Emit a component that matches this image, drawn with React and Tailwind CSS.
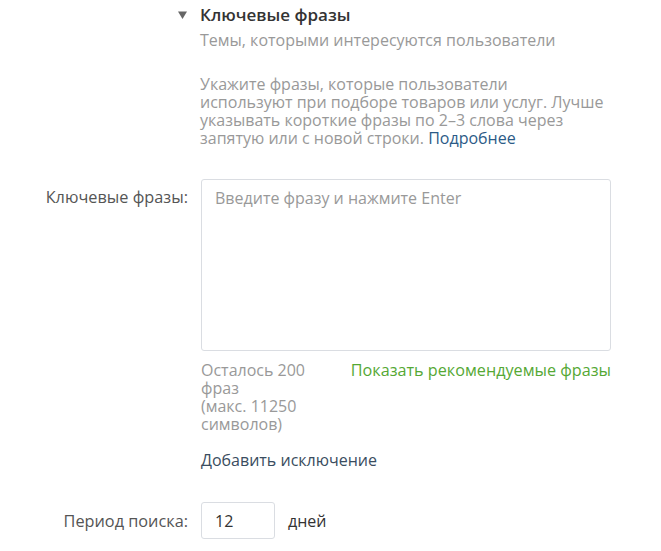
export default function App() {
  return (
    <div className="min-h-screen bg-white font-['Open_Sans',sans-serif] text-[16px] leading-[18px]">
      <div className="pl-[178px] pt-[5px]">
        <div className="flex items-center">
          <span className="w-[22px]">
            <svg width="9" height="8" viewBox="0 0 9 8" className="block">
              <path d="M0 0.5h9L4.5 8z" fill="#666" />
            </svg>
          </span>
          <h2 className="text-[17px] font-semibold leading-[20px] text-[#333]">Ключевые фразы</h2>
        </div>
        <div className="pl-[22px]">
          <p className="mt-[6px] text-[#999]">Темы, которыми интересуются пользователи</p>
          <p className="mt-[26px] w-[425px] text-[#999]">
            Укажите фразы, которые пользователи
            <br />
            используют при подборе товаров или услуг. Лучше указывать короткие фразы по 2–3 слова через запятую или с новой строки.{" "}
            <a className="text-[#2c5b87]">Подробнее</a>
          </p>
        </div>
      </div>

      <div className="mt-[32px] flex gap-[13px]">
        <label className="w-[188px] shrink-0 pt-[9px] text-right text-[16.3px] text-[#555]">Ключевые фразы:</label>
        <div className="w-[410px]">
          <textarea
            className="block h-[172px] w-[410px] resize-none rounded-[3px] border border-[#dadde2] px-[13px] py-[9px] text-[16px] leading-[18px] text-[#333] placeholder:text-[#999] outline-none"
            placeholder="Введите фразу и нажмите Enter"
          />
          <div className="mt-[10px] flex justify-between">
            <div className="w-[112px] text-[#999]">
              <div>Осталось 200 фраз</div>
              <div>(макс. 11250 символов)</div>
            </div>
            <a className="text-[16.2px] text-[#55a834]">Показать рекомендуемые фразы</a>
          </div>
          <a className="mt-[18px] block text-[#3a4d60]">Добавить исключение</a>
        </div>
      </div>

      <div className="mt-[33px] flex items-center gap-[13px]">
        <label className="w-[188px] shrink-0 text-right text-[16.3px] text-[#555]">Период поиска:</label>
        <input
          className="h-[37px] w-[74px] rounded-[3px] border border-[#dadde2] px-[13px] text-[16px] text-[#333] outline-none"
          defaultValue="12"
        />
        <span className="text-[#333]">дней</span>
      </div>
    </div>
  );
}
